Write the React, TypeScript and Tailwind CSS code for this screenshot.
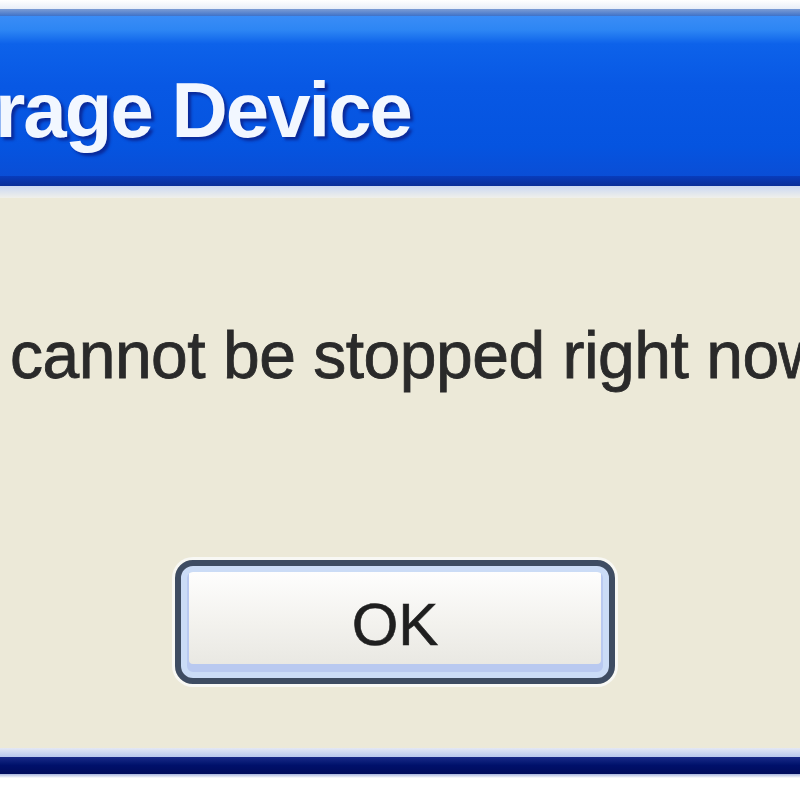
import React from "react";

export default function App() {
  return (
    <div className="w-[800px] h-[800px] overflow-hidden flex flex-col bg-white font-['Liberation_Sans',Arial,sans-serif]">
      {/* top edge */}
      <div className="h-[9px] bg-gradient-to-b from-white to-[#e8eef8]" />
      <div className="h-[7px] bg-gradient-to-b from-[#7c9cd4] to-[#3f72c8]" />

      {/* Title bar */}
      <div className="h-[160px] bg-[linear-gradient(to_bottom,#3a8cf6_0px,#2d86f4_14px,#0d62ea_28px,#0858e4_70px,#0554e0_130px,#0a4ed6_160px)] pt-[55px]">
        <div className="-ml-[5px] whitespace-nowrap text-[78px] leading-none font-bold text-[#f2f7ff] tracking-[-2px] [text-shadow:3px_3px_3px_#0a2a9a]">
          rage Device
        </div>
      </div>
      <div className="h-[10px] bg-gradient-to-b from-[#083cbc] to-[#0a2e98]" />
      <div className="h-[12px] bg-gradient-to-b from-[#cbd8f2] to-[#f0f0ea]" />

      {/* Body */}
      <div className="h-[550px] bg-[#ece9d8] flex flex-col">
        <div className="pt-[124px] pl-[10px] whitespace-nowrap text-[66px] leading-none text-[#2a2a2a] tracking-[-0.5px] [-webkit-text-stroke:0.8px_#2a2a2a]">
          cannot be stopped right now
        </div>
        <div className="mt-[172px] ml-[175px] w-[440px] h-[124px] rounded-[18px] border-[6px] border-[#3e4c62] bg-gradient-to-b from-[#ffffff] via-[#f3f2ee] to-[#e6e5df] shadow-[inset_0_0_0_6px_#cbdcf6,inset_0_-6px_0_8px_#b9c9f0,0_0_0_3px_#f8f8f4] flex items-center justify-center">
          <span className="text-[60px] leading-none text-[#1f1f1f] pt-[6px] [-webkit-text-stroke:0.6px_#1f1f1f]">OK</span>
        </div>
      </div>

      {/* bottom frame */}
      <div className="h-[9px] bg-gradient-to-b from-[#e4e8f4] to-[#b8c8ec]" />
      <div className="h-[17px] bg-gradient-to-b from-[#1a2a88] via-[#00106a] to-[#000c5c]" />
      <div className="h-[4px] bg-gradient-to-b from-[#a8b4dc] to-white" />
      <div className="flex-1 bg-white" />
    </div>
  );
}
